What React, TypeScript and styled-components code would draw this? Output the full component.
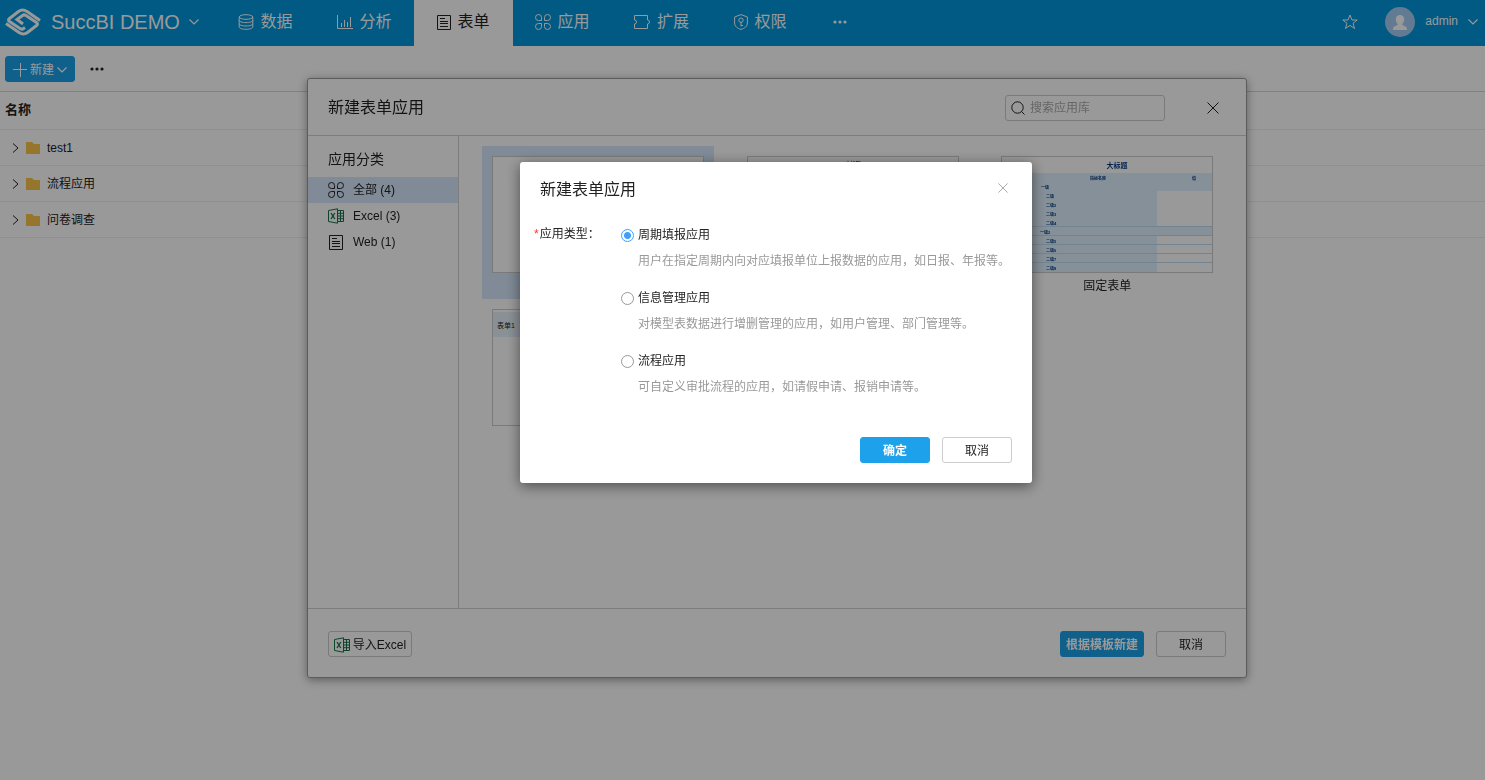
import React, { useState } from 'react';
import styled, { createGlobalStyle } from 'styled-components';

const GlobalStyle = createGlobalStyle`
  * { box-sizing: border-box; }
  body {
    margin: 0;
    background: #fff;
    color: #222;
    font: 12px/18px "Liberation Sans", "Noto Sans CJK SC", sans-serif;
  }
  button, input { font: inherit; color: inherit; }
  button { padding: 0; border: 0; background: none; cursor: pointer; }
  svg { display: block; flex: none; }
  h2, h3, p { margin: 0; font-weight: normal; }
`;

/* ---------- icons ---------- */

const Svg = styled.svg.attrs(p => ({
  fill: p.fill ?? 'none',
  stroke: p.stroke ?? 'currentColor',
  'aria-hidden': true,
}))``;

const Logo = () => (
  <Svg width="36" height="28" viewBox="0 0 36 28" strokeWidth="3">
    <path d="M35 12.500 22 3.500Q17.500 .5 13.500 3.500L4.500 10.500Q2.500 12 4.500 13.500L15 20.500Q17 21.700 18.500 20.500L20 19.500" />
    <path d="M1 15.500 14 24.500Q18.500 27.500 22.500 24.500L31.500 17.500Q33.500 16 31.500 14.500L21 7.500Q19 6.300 17.500 7.500L12 11.500 18 16" />
  </Svg>
);

const ChevronDown = () => (
  <Svg width="10" height="10" viewBox="0 0 10 10" strokeWidth="1.200"><path d="M.5 2.500 5 7 9.500 2.500" /></Svg>
);
const ChevronRight = () => (
  <Svg width="7" height="10" viewBox="0 0 7 10"><path d="M1 .5 6 5 1 9.500" /></Svg>
);
const DatabaseIcon = () => (
  <Svg width="16" height="16" viewBox="0 0 16 16">
    <ellipse cx="8" cy="3" rx="6.800" ry="2.300" />
    <path d="M1.200 3v10c0 1.300 2.900 2.300 6.800 2.300s6.800-1 6.800-2.300V3M1.200 6.300c0 1.300 2.900 2.300 6.800 2.300s6.800-1 6.800-2.300M1.200 9.700c0 1.300 2.900 2.300 6.800 2.300s6.800-1 6.800-2.300" />
  </Svg>
);
const ChartIcon = () => (
  <Svg width="16" height="16" viewBox="0 0 16 16">
    <path d="M.5 1v13.500H16M4.500 9v4M7.500 6v7M10.500 8v5M13.500 3v10" />
  </Svg>
);
const FormIcon = () => (
  <Svg width="14" height="16" viewBox="0 0 14 16">
    <path d="M.5 1.500h13v14H.500zM3 4.500h5M3 7.500h8M3 9.500h8M3 12.500h8" />
  </Svg>
);
const AppsIcon = () => (
  <Svg width="16" height="16" viewBox="0 0 16 16">
    <path d="M6.500 6.500V3.500A3 3 0 1 0 3.500 6.500zM9.500 6.500V3.500A3 3 0 1 1 12.500 6.500zM6.500 9.500V12.500A3 3 0 1 1 3.500 9.500zM9.500 9.500V12.500A3 3 0 1 0 12.500 9.500z" />
  </Svg>
);
const ExtendIcon = () => (
  <Svg width="17" height="16" viewBox="0 0 17 16">
    <path d="M.5 1.500h13v4.500a2 2 0 1 1 0 4v4.500H.500V10a2 2 0 1 0 0-4z" />
  </Svg>
);
const ShieldIcon = () => (
  <Svg width="14" height="16" viewBox="0 0 14 16">
    <path d="M7 .6 13.400 3v6c0 3.200-2.600 5.300-6.400 6.400C3.200 14.300.600 12.200.600 9V3z" />
    <circle cx="7" cy="6.200" r="2.200" />
    <path d="M7 8.400v4M7 11.500h2" />
  </Svg>
);
const DotsIcon = () => (
  <Svg width="14" height="4" viewBox="0 0 14 4" fill="currentColor" stroke="none">
    <circle cx="2" cy="2" r="1.600" /><circle cx="7" cy="2" r="1.600" /><circle cx="12" cy="2" r="1.600" />
  </Svg>
);
const StarIcon = () => (
  <Svg width="16" height="16" viewBox="0 0 16 16">
    <path d="m8 1 2 5h5.200l-4.200 3.300 1.600 5.200L8 11.400l-4.600 3.100L5 9.300.800 6H6z" />
  </Svg>
);
const PlusIcon = () => (
  <Svg width="14" height="14" viewBox="0 0 14 14"><path d="M7.500 0v14M0 6.500h14" /></Svg>
);
const FolderIcon = () => (
  <Svg width="14" height="12" viewBox="0 0 14 12" stroke="none" fill="#fbc54c">
    <path d="M0 0h6l2 2h6v10H0z" />
  </Svg>
);
const SearchIcon = () => (
  <Svg width="14" height="14" viewBox="0 0 14 14">
    <circle cx="6.500" cy="6.500" r="5.700" /><path d="m10.500 10.500 3 3" />
  </Svg>
);
const CloseIcon = ({ size }: { size: number }) => (
  <Svg width={size} height={size} viewBox="0 0 12 12"><path d="M.5.5l11 11M11.500.5l-11 11" /></Svg>
);
const ExcelIcon = () => (
  <Svg width="16" height="16" viewBox="0 0 16 16" stroke="#157347">
    <path d="M9.500.800.500 2.500v11l9 1.700z" />
    <path d="M3 5l3.800 6M6.800 5 3 11" strokeWidth="1.300" />
    <path d="M10 2.500h5.500v11H10M10 5.300h5.500M10 8h5.500M10 10.700h5.500M12.500 2.500v11" />
  </Svg>
);
const PersonIcon = () => (
  <Svg width="30" height="30" viewBox="0 0 30 30" stroke="none" fill="#fff">
    <path d="M15 8c2.800 0 4.200 1.900 4.200 4.300 0 2-.8 3.700-1.900 4.600v1.200c1.600.8 4.700 1.500 4.700 3.900v.5q0 .5-.5.500h-13q-.5 0-.5-.5V22c0-2.400 3.100-3.100 4.700-3.900v-1.200c-1.100-.9-1.900-2.600-1.900-4.600C10.800 9.900 12.200 8 15 8z" />
  </Svg>
);

/* ---------- top bar ---------- */

const TopBar = styled.header`
  display: flex;
  height: 46px;
  background: #0096dc;
  color: #fff;
`;
const Brand = styled.button`
  display: flex;
  align-items: center;
  width: 216px;
  padding: 0 0 2px 5px;
  font-size: 20px;
  line-height: 24px;
`;
const BrandName = styled.span`
  margin: 0 9px 0 10px;
`;
const Nav = styled.nav`
  display: flex;
  flex: 1;
`;
const NavTab = styled.a<{ $active?: boolean; $narrow?: boolean }>`
  display: flex;
  align-items: center;
  justify-content: center;
  gap: 6px;
  width: ${p => (p.$narrow ? 60 : 99)}px;
  padding-bottom: 2px;
  font-size: 16px;
  line-height: 20px;
  text-decoration: none;
  color: ${p => (p.$active ? '#222' : '#fff')};
  background: ${p => (p.$active ? '#fff' : 'none')};
`;
const UserArea = styled.div`
  display: flex;
  align-items: center;
  padding: 0 7px 2px 0;
`;
const IconButton = styled.button`
  display: flex;
  align-items: center;
  justify-content: center;
  width: 28px;
  height: 28px;
`;
const UserButton = styled.button`
  display: flex;
  align-items: center;
  gap: 10px;
  margin-left: 21px;
`;
const UserName = styled.span`
  padding-bottom: 2px;
`;
const Avatar = styled.span`
  border-radius: 50%;
  background: #a3cdf5;
`;

/* ---------- page ---------- */

const Toolbar = styled.div`
  display: flex;
  align-items: center;
  gap: 8px;
  height: 46px;
  padding: 0 5px;
  border-bottom: 1px solid #d5d5d5;
`;
const Button = styled.button<{ $primary?: boolean; $width?: number }>`
  display: flex;
  align-items: center;
  justify-content: center;
  gap: 3px;
  height: 26px;
  width: ${p => p.$width ?? 70}px;
  padding-top: 2px;
  border: 1px solid ${p => (p.$primary ? '#1ca1ea' : '#ccc')};
  border-radius: 3px;
  background: ${p => (p.$primary ? '#1ca1ea' : '#fff')};
  color: ${p => (p.$primary ? '#fff' : '#222')};
`;
const StrongButton = styled(Button)`
  font-weight: bold;
`;
const FileTable = styled.table`
  width: 100%;
  border-collapse: collapse;
  th, td {
    padding: 0 5px;
    text-align: left;
    border-bottom: 1px solid #eee;
  }
  th { height: 37px; font-size: 13px; font-weight: bold; }
  td { height: 36px; padding-top: 2px; }
`;
const TreeCell = styled.div`
  display: flex;
  align-items: center;
  gap: 7px;
  padding-left: 7px;
`;

/* ---------- template window ---------- */

const Layer = styled.div<{ $dim?: boolean }>`
  position: fixed;
  inset: 0;
  display: flex;
  justify-content: center;
  align-items: flex-start;
  padding: ${p => (p.$dim ? '162px 0 0 67px' : '78px 0 0 69px')};
  background: ${p => (p.$dim ? 'rgba(0, 0, 0, 0.4)' : 'none')};
`;
const Window = styled.section`
  display: flex;
  flex-direction: column;
  width: 940px;
  min-height: 600px;
  border: 1px solid #999;
  border-radius: 3px;
  background: #fff;
  box-shadow: 0 2px 10px rgba(0, 0, 0, 0.4);
`;
const WindowHeader = styled.header`
  display: flex;
  align-items: center;
  height: 57px;
  padding: 1px 19px 0 20px;
  border-bottom: 1px solid #d0d0d0;
`;
const Title = styled.h2`
  flex: 1;
  font-size: 16px;
  line-height: 24px;
`;
const SearchBox = styled.label`
  display: flex;
  align-items: center;
  gap: 5px;
  width: 160px;
  height: 26px;
  margin-right: 34px;
  padding: 0 5px;
  border: 1px solid #ccc;
  border-radius: 3px;
`;
const SearchInput = styled.input`
  flex: 1;
  min-width: 0;
  padding: 0;
  border: 0;
  outline: 0;
  background: none;
  &::placeholder { color: #aaa; opacity: 1; }
`;
const WindowBody = styled.div`
  display: flex;
  flex: 1;
`;
const Sidebar = styled.aside`
  width: 151px;
  border-right: 1px solid #d0d0d0;
`;
const SidebarTitle = styled.h3`
  padding: 13px 20px 8px;
  font-size: 14px;
  line-height: 20px;
`;
const Category = styled.button<{ $active?: boolean }>`
  display: flex;
  align-items: center;
  gap: 9px;
  width: 100%;
  height: 26px;
  padding: 0 20px;
  background: ${p => (p.$active ? '#d6e8fc' : 'none')};
`;
const CategoryIcon = styled.span`
  display: flex;
  justify-content: center;
  width: 16px;
`;
const Gallery = styled.div`
  flex: 1;
  display: grid;
  grid-template-columns: repeat(3, 232px);
  grid-auto-rows: 153px;
  justify-content: space-evenly;
  padding-top: 10px;
`;
const Card = styled.button<{ $active?: boolean }>`
  display: flex;
  flex-direction: column;
  align-items: center;
  padding: 10px;
  background: ${p => (p.$active ? '#d6e8fc' : 'none')};
`;
const Thumb = styled.span`
  width: 212px;
  height: 117px;
  margin-bottom: 4px;
  border: 1px solid #ccc;
  background: #fff;
`;
const WindowFooter = styled.footer`
  display: flex;
  align-items: center;
  gap: 12px;
  height: 69px;
  padding: 1px 20px 0;
  border-top: 1px solid #d0d0d0;
`;
const Spacer = styled.span`
  flex: 1;
`;

const detailRows = [
  { y: 31, x: 39, t: '一级' }, { y: 40, x: 44, t: '二级' }, { y: 49, x: 44, t: '二级2' },
  { y: 58, x: 44, t: '二级3' }, { y: 67, x: 44, t: '二级4' }, { y: 76, x: 38, t: '一级2' },
  { y: 85, x: 44, t: '二级5' }, { y: 94, x: 44, t: '二级6' }, { y: 103, x: 44, t: '二级7' }, { y: 112, x: 44, t: '二级8' },
];

const FixedFormPreview = () => (
  <Svg width="210" height="115" viewBox="0 0 210 115" stroke="none">
    <rect y="16" width="210" height="99" fill="#e0f0fd" />
    <rect x="155" y="34" width="55" height="36" fill="#fff" />
    <rect x="155" y="79" width="55" height="36" fill="#fff" />
    <path d="M0 69.500h210M0 78.500h210M0 87.500h210M0 96.500h210M0 105.500h210" stroke="#bfdcf2" />
    <g fill="#0a3d80" fontWeight="bold">
      <text x="115" y="11" fontSize="7" textAnchor="middle">大标题</text>
      <text x="96" y="23" fontSize="4" textAnchor="middle">指标名称</text>
      <text x="192" y="23" fontSize="4" textAnchor="middle">值</text>
      {detailRows.map(r => <text key={r.y} x={r.x} y={r.y + 1} fontSize="4">{r.t}</text>)}
    </g>
  </Svg>
);
const TitledFormPreview = () => (
  <Svg width="210" height="115" viewBox="0 0 210 115" stroke="none">
    <text x="105" y="8" fontSize="5" fontWeight="bold" textAnchor="middle" fill="#0a3d80">大标题</text>
  </Svg>
);
const WebFormPreview = () => (
  <Svg width="210" height="115" viewBox="0 0 210 115" stroke="none">
    <rect y="2" width="210" height="25" fill="#e6f2fb" />
    <text x="4" y="18" fontSize="7" fill="#222">表单1</text>
  </Svg>
);

/* ---------- type dialog ---------- */

const Dialog = styled.form`
  width: 512px;
  padding: 15px 20px 20px;
  border-radius: 3px;
  background: #fff;
  box-shadow: 0 3px 14px rgba(0, 0, 0, 0.5);
`;
const DialogHeader = styled.div`
  display: flex;
  align-items: flex-end;
  height: 25px;
  margin-bottom: 23px;
`;
const DialogClose = styled(IconButton)`
  width: 18px;
  height: 18px;
  margin-bottom: 5px;
  color: #999;
`;
const Field = styled.fieldset`
  display: flex;
  margin: 0;
  padding: 0;
  border: 0;
`;
const FieldName = styled.span`
  width: 82px;
  margin-left: -6px;
  &::before { content: '*'; color: #f33; margin-right: 1px; }
`;
const Options = styled.div`
  flex: 1;
  margin-left: 5px;
  padding-top: 1px;
`;
const Option = styled.div`
  height: 63px;
`;
const OptionLabel = styled.label`
  display: flex;
  align-items: center;
  gap: 4px;
  height: 18px;
  margin-bottom: 8px;
`;
const Radio = styled.input`
  appearance: none;
  width: 13px;
  height: 13px;
  margin: 0;
  border: 1px solid #999;
  border-radius: 50%;
  background: #fff;
  &:checked {
    border-color: #409eff;
    background: radial-gradient(circle, #409eff 3px, #fff 4px);
  }
`;
const Hint = styled.p`
  padding-left: 17px;
  color: #999;
  white-space: nowrap;
`;
const DialogFooter = styled.div`
  display: flex;
  justify-content: flex-end;
  gap: 12px;
  margin-top: 22px;
`;

const tabs = [
  { name: '数据', icon: <DatabaseIcon /> },
  { name: '分析', icon: <ChartIcon /> },
  { name: '表单', icon: <FormIcon /> },
  { name: '应用', icon: <AppsIcon /> },
  { name: '扩展', icon: <ExtendIcon /> },
  { name: '权限', icon: <ShieldIcon /> },
];
const folders = ['test1', '流程应用', '问卷调查'];
const categories = [
  { name: '全部 (4)', icon: <AppsIcon /> },
  { name: 'Excel (3)', icon: <ExcelIcon /> },
  { name: 'Web (1)', icon: <FormIcon /> },
];
const types = [
  { name: '周期填报应用', hint: '用户在指定周期内向对应填报单位上报数据的应用，如日报、年报等。' },
  { name: '信息管理应用', hint: '对模型表数据进行增删管理的应用，如用户管理、部门管理等。' },
  { name: '流程应用', hint: '可自定义审批流程的应用，如请假申请、报销申请等。' },
];

export default function App() {
  const [type, setType] = useState(0);
  const [category, setCategory] = useState(0);

  return (
    <>
      <GlobalStyle />
      <TopBar>
        <Brand type="button"><Logo /><BrandName>SuccBI DEMO</BrandName><ChevronDown /></Brand>
        <Nav>
          {tabs.map(t => (
            <NavTab key={t.name} href="#" $active={t.name === '表单'}>{t.icon}{t.name}</NavTab>
          ))}
          <NavTab href="#" $narrow aria-label="更多"><DotsIcon /></NavTab>
        </Nav>
        <UserArea>
          <IconButton type="button" aria-label="收藏"><StarIcon /></IconButton>
          <UserButton type="button">
            <Avatar><PersonIcon /></Avatar><UserName>admin</UserName><ChevronDown />
          </UserButton>
        </UserArea>
      </TopBar>

      <main>
        <Toolbar>
          <Button type="button" $primary><PlusIcon />新建<ChevronDown /></Button>
          <IconButton type="button" aria-label="更多"><DotsIcon /></IconButton>
        </Toolbar>
        <FileTable>
          <thead><tr><th scope="col">名称</th></tr></thead>
          <tbody>
            {folders.map(f => (
              <tr key={f}><td><TreeCell><ChevronRight /><FolderIcon />{f}</TreeCell></td></tr>
            ))}
          </tbody>
        </FileTable>
      </main>

      <Layer>
        <Window role="dialog" aria-label="新建表单应用">
          <WindowHeader>
            <Title>新建表单应用</Title>
            <SearchBox>
              <SearchIcon />
              <SearchInput type="text" placeholder="搜索应用库" aria-label="搜索应用库" />
            </SearchBox>
            <IconButton type="button" aria-label="关闭"><CloseIcon size={12} /></IconButton>
          </WindowHeader>
          <WindowBody>
            <Sidebar>
              <SidebarTitle>应用分类</SidebarTitle>
              {categories.map((c, i) => (
                <Category key={c.name} type="button" $active={i === category} onClick={() => setCategory(i)}>
                  <CategoryIcon>{c.icon}</CategoryIcon>{c.name}
                </Category>
              ))}
            </Sidebar>
            <Gallery>
              <Card type="button" $active aria-label="空白"><Thumb /></Card>
              <Card type="button" aria-label="浮动"><Thumb><TitledFormPreview /></Thumb></Card>
              <Card type="button"><Thumb><FixedFormPreview /></Thumb>固定表单</Card>
              <Card type="button" aria-label="Web"><Thumb><WebFormPreview /></Thumb></Card>
            </Gallery>
          </WindowBody>
          <WindowFooter>
            <Button type="button" $width={84}><ExcelIcon />导入Excel</Button>
            <Spacer />
            <StrongButton type="button" $primary $width={84}>根据模板新建</StrongButton>
            <Button type="button">取消</Button>
          </WindowFooter>
        </Window>
      </Layer>

      <Layer $dim>
        <Dialog role="dialog" aria-label="新建表单应用" onSubmit={e => e.preventDefault()}>
          <DialogHeader>
            <Title>新建表单应用</Title>
            <DialogClose type="button" aria-label="关闭"><CloseIcon size={10} /></DialogClose>
          </DialogHeader>
          <Field aria-label="应用类型">
            <FieldName>应用类型：</FieldName>
            <Options>
              {types.map((t, i) => (
                <Option key={t.name}>
                  <OptionLabel>
                    <Radio type="radio" name="type" checked={i === type} onChange={() => setType(i)} />
                    {t.name}
                  </OptionLabel>
                  <Hint>{t.hint}</Hint>
                </Option>
              ))}
            </Options>
          </Field>
          <DialogFooter>
            <StrongButton type="submit" $primary>确定</StrongButton>
            <Button type="button">取消</Button>
          </DialogFooter>
        </Dialog>
      </Layer>
    </>
  );
}
